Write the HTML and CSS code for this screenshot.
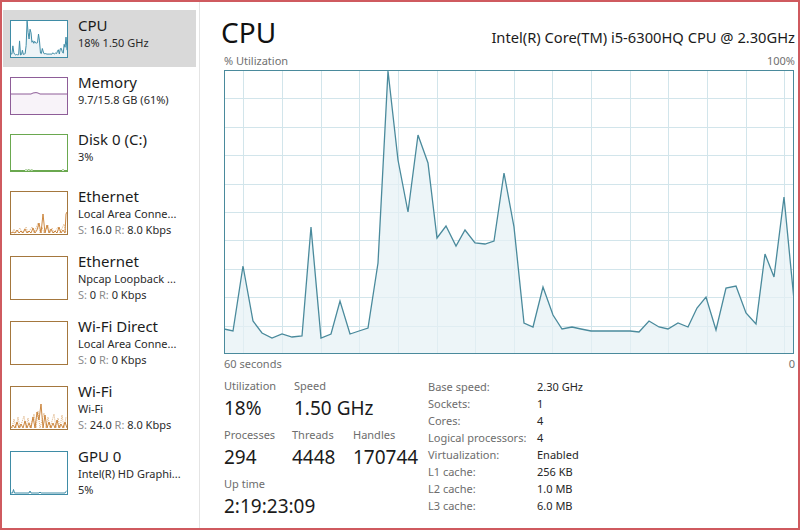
FILE: index.html
```html
<!DOCTYPE html>
<html>
	<head>
		<meta charset="UTF-8">
		<title>Task Manager - CPU</title>
		<link rel="stylesheet" href="styles.css">
	</head>
	<body>
		<div class="window">
			<aside class="sidebar">
				<div class="item selected">
					<svg class="thumb thumb-cpu" viewBox="0 0 570 284" preserveAspectRatio="none">
						<polygon class="cpu-fill" points="0,259 9,261 19,196 29,251 38,263 48,268 58,264 68,267 78,266 87,157 97,268 107,264 116,231 126,264 135,261 144,258 154,193 164,1 174,90 184,142 194,65 204,93 213,168 222,156 232,176 241,160 251,173 261,174 270,171 280,103 290,157 300,253 309,257 319,217 329,245 338,259 348,257 357,259 367,261 377,261 387,261 396,261 406,261 415,262 425,251 435,257 444,259 454,253 464,257 473,238 482,227 492,260 502,218 512,216 522,243 532,254 541,184 550,207 560,127 570,230 570,284 0,284"/>
						<polyline class="cpu-line" vector-effect="non-scaling-stroke" points="0,259 9,261 19,196 29,251 38,263 48,268 58,264 68,267 78,266 87,157 97,268 107,264 116,231 126,264 135,261 144,258 154,193 164,1 174,90 184,142 194,65 204,93 213,168 222,156 232,176 241,160 251,173 261,174 270,171 280,103 290,157 300,253 309,257 319,217 329,245 338,259 348,257 357,259 367,261 377,261 387,261 396,261 406,261 415,262 425,251 435,257 444,259 454,253 464,257 473,238 482,227 492,260 502,218 512,216 522,243 532,254 541,184 550,207 560,127 570,230"/>
					</svg>
					<div class="item-text">
						<div class="item-title">CPU</div>
						<div class="item-sub">18% 1.50 GHz</div>
					</div>
				</div>

				<div class="item">
					<svg class="thumb thumb-mem" viewBox="0 0 56 36" preserveAspectRatio="none">
						<polygon class="mem-fill" points="0,16 20,16 22,15 25,14.6 27,15 29,16 56,16 56,36 0,36"/>
						<polyline class="mem-line" points="0,16 20,16 22,15 25,14.6 27,15 29,16 56,16"/>
					</svg>
					<div class="item-text">
						<div class="item-title">Memory</div>
						<div class="item-sub">9.7/15.8 GB (61%)</div>
					</div>
				</div>

				<div class="item">
					<svg class="thumb thumb-disk" viewBox="0 0 56 36" preserveAspectRatio="none">
						<polyline class="disk-line" points="0,35.5 14,35.5 15,34.5 16,35.5 18,34.6 19,35.5 21,34.8 22,35.5 51,35.5 52,34.4 53,35.5 56,35.5"/>
					</svg>
					<div class="item-text">
						<div class="item-title">Disk 0 (C:)</div>
						<div class="item-sub">3%</div>
					</div>
				</div>

				<div class="item tall">
					<svg class="thumb thumb-net" viewBox="0 0 56 42" preserveAspectRatio="none">
						<polyline class="net-dash" points="1,41 3,37 5,41 9,36 11,41 15,35 17,41 21,35 23,41 27,31 29,41 31,35 33,41 37,33 39,41 41,36 43,41 47,35 49,41 53,32 55,41"/>
						<polyline class="net-line" points="0,41 2,40 4,41 6,38 8,41 10,39 12,41 14,37 16,41 18,39 20,41 22,36 24,41 26,38 28,31 30,41 32,22 34,41 36,33 38,41 40,37 42,41 44,39 46,41 48,35 50,41 52,38 54,41 55,22 56,20"/>
					</svg>
					<div class="item-text">
						<div class="item-title">Ethernet</div>
						<div class="item-sub">Local Area Conne...</div>
						<div class="item-sub"><span class="dim">S:</span> 16.0 <span class="dim">R:</span> 8.0 Kbps</div>
					</div>
				</div>

				<div class="item tall">
					<svg class="thumb thumb-net" viewBox="0 0 56 42"></svg>
					<div class="item-text">
						<div class="item-title">Ethernet</div>
						<div class="item-sub">Npcap Loopback ...</div>
						<div class="item-sub"><span class="dim">S:</span> 0 <span class="dim">R:</span> 0 Kbps</div>
					</div>
				</div>

				<div class="item tall">
					<svg class="thumb thumb-net" viewBox="0 0 56 42"></svg>
					<div class="item-text">
						<div class="item-title">Wi-Fi Direct</div>
						<div class="item-sub">Local Area Conne...</div>
						<div class="item-sub"><span class="dim">S:</span> 0 <span class="dim">R:</span> 0 Kbps</div>
					</div>
				</div>

				<div class="item tall">
					<svg class="thumb thumb-net" viewBox="0 0 56 42" preserveAspectRatio="none">
						<polyline class="net-dash" points="1,41 3,32 5,41 7,30 9,41 13,29 15,41 17,31 19,41 23,27 25,41 27,24 29,41 33,26 35,41 37,30 39,41 43,27 45,41 47,31 49,41 51,28 53,41 55,30"/>
						<polyline class="net-line" points="0,41 2,38 4,41 6,35 8,41 10,37 12,41 14,34 16,41 18,36 20,41 22,30 24,41 26,25 28,33 30,17 32,41 34,28 36,41 38,35 40,41 42,36 44,41 46,33 48,41 50,37 52,41 54,35 56,41"/>
					</svg>
					<div class="item-text">
						<div class="item-title">Wi-Fi</div>
						<div class="item-sub">Wi-Fi</div>
						<div class="item-sub"><span class="dim">S:</span> 24.0 <span class="dim">R:</span> 8.0 Kbps</div>
					</div>
				</div>

				<div class="item tall">
					<svg class="thumb thumb-gpu" viewBox="0 0 56 42" preserveAspectRatio="none">
						<polyline class="cpu-line" points="0,41 1.5,41 2.5,37.5 3.5,41 18,41 19,39 20,41 28,41 29,40 30,41 54,41 55,39.5 56,38.5"/>
					</svg>
					<div class="item-text">
						<div class="item-title">GPU 0</div>
						<div class="item-sub">Intel(R) HD Graphi...</div>
						<div class="item-sub">5%</div>
					</div>
				</div>
			</aside>

			<main class="panel">
				<header class="panel-head">
					<h1 class="panel-title">CPU</h1>
					<span class="cpu-name">Intel(R) Core(TM) i5-6300HQ CPU @ 2.30GHz</span>
				</header>

				<div class="axis">
					<span>% Utilization</span>
					<span>100%</span>
				</div>

				<svg class="chart" width="570" height="284" viewBox="0 0 570 284">
					<!-- grid: 10 rows, columns scrolled by 19px -->
					<path class="grid-line" d="M0 28.5 H570 M0 57.5 H570 M0 85.5 H570 M0 114.5 H570 M0 142.5 H570 M0 170.5 H570 M0 199.5 H570 M0 227.5 H570 M0 256.5 H570
						M19.5 0 V284 M58.5 0 V284 M97.5 0 V284 M135.5 0 V284 M174.5 0 V284 M213.5 0 V284 M251.5 0 V284 M290.5 0 V284
						M328.5 0 V284 M367.5 0 V284 M406.5 0 V284 M444.5 0 V284 M483.5 0 V284 M522.5 0 V284 M560.5 0 V284"/>
					<polygon class="chart-fill" points="0,259 9,261 19,196 29,251 38,263 48,268 58,264 68,267 78,266 87,157 97,268 107,264 116,231 126,264 135,261 144,258 154,193 164,1 174,90 184,142 194,65 204,93 213,168 222,156 232,176 241,160 251,173 261,174 270,171 280,103 290,157 300,253 309,257 319,217 329,245 338,259 348,257 357,259 367,261 377,261 387,261 396,261 406,261 415,262 425,251 435,257 444,259 454,253 464,257 473,238 482,227 492,260 502,218 512,216 522,243 532,254 541,184 550,207 560,127 570,230 570,284 0,284"/>
					<polyline class="chart-line" points="0,259 9,261 19,196 29,251 38,263 48,268 58,264 68,267 78,266 87,157 97,268 107,264 116,231 126,264 135,261 144,258 154,193 164,1 174,90 184,142 194,65 204,93 213,168 222,156 232,176 241,160 251,173 261,174 270,171 280,103 290,157 300,253 309,257 319,217 329,245 338,259 348,257 357,259 367,261 377,261 387,261 396,261 406,261 415,262 425,251 435,257 444,259 454,253 464,257 473,238 482,227 492,260 502,218 512,216 522,243 532,254 541,184 550,207 560,127 570,230"/>
					<rect class="chart-border" x="0.5" y="0.5" width="569" height="283"/>
				</svg>

				<div class="axis axis-bottom">
					<span>60 seconds</span>
					<span>0</span>
				</div>

				<section class="stats">
					<div class="stats-left">
						<div class="stat-row">
							<div class="stat w-util">
								<div class="stat-label">Utilization</div>
								<div class="stat-value">18%</div>
							</div>
							<div class="stat">
								<div class="stat-label">Speed</div>
								<div class="stat-value">1.50 GHz</div>
							</div>
						</div>
						<div class="stat-row">
							<div class="stat w-proc">
								<div class="stat-label">Processes</div>
								<div class="stat-value">294</div>
							</div>
							<div class="stat w-thr">
								<div class="stat-label">Threads</div>
								<div class="stat-value">4448</div>
							</div>
							<div class="stat">
								<div class="stat-label">Handles</div>
								<div class="stat-value">170744</div>
							</div>
						</div>
						<div class="stat-row">
							<div class="stat">
								<div class="stat-label">Up time</div>
								<div class="stat-value">2:19:23:09</div>
							</div>
						</div>
					</div>

					<div class="details">
						<span class="d-label">Base speed:</span><span class="d-value">2.30 GHz</span>
						<span class="d-label">Sockets:</span><span class="d-value">1</span>
						<span class="d-label">Cores:</span><span class="d-value">4</span>
						<span class="d-label">Logical processors:</span><span class="d-value">4</span>
						<span class="d-label">Virtualization:</span><span class="d-value">Enabled</span>
						<span class="d-label">L1 cache:</span><span class="d-value">256 KB</span>
						<span class="d-label">L2 cache:</span><span class="d-value">1.0 MB</span>
						<span class="d-label">L3 cache:</span><span class="d-value">6.0 MB</span>
					</div>
				</section>
			</main>
		</div>
	</body>
</html>
```

FILE: styles.css
```css
html, body{margin: 0; padding: 0; background: #fff;}
.window{width: 800px; height: 530px; box-sizing: border-box; border: 2px solid #cf5a5f; display: flex; background: #fff; font-family: "Noto Sans", "Open Sans", sans-serif; color: #1b1b1b; overflow: hidden;}

/* left list */
.sidebar{width: 198px; flex: none; box-sizing: border-box; border-right: 1px solid #e4e4e4; padding-top: 8px;}
.item{display: flex; width: 193px; margin-left: 1px; box-sizing: border-box; padding: 10px 0 9px 7px;}
.item.selected{background: #d9d9d9;}
.thumb{display: block; flex: none; width: 58px; height: 38px; box-sizing: border-box; margin-right: 10px; background: #fff; overflow: hidden;}
.item.tall .thumb{height: 44px;}
.item-text{margin-top: -4px; white-space: nowrap;}
.item-title{font-size: 15px; line-height: 19px; color: #1b1b1b;}
.item-sub{font-size: 11px; line-height: 15px; color: #2a2a2a;}
.item.tall .item-sub{line-height: 15.5px;}
.dim{color: #8a8a8a;}

.thumb-cpu, .thumb-gpu{border: 1px solid #3f8ca6;}
.thumb-mem{border: 1px solid #8e5d98;}
.thumb-disk{border: 1px solid #6aa84f;}
.thumb-net{border: 1px solid #a4773e;}

.cpu-fill{fill: #edf4f7;}
.cpu-line{fill: none; stroke: #3f8ca6; stroke-width: 1;}
.mem-fill{fill: #f8f3f9;}
.mem-line{fill: none; stroke: #8e5d98; stroke-width: 1;}
.disk-line{fill: none; stroke: #6aa84f; stroke-width: 1;}
.net-line{fill: none; stroke: #c67a2c; stroke-width: 0.9;}
.net-dash{fill: none; stroke: #d49a5c; stroke-width: 0.8; stroke-dasharray: 1 1;}

/* right panel */
.panel{flex: 1; padding: 14px 3px 0 24px; min-width: 0;}
.panel-head{display: flex; justify-content: space-between; align-items: baseline;}
.panel-title{margin: 0 0 0 -3px; font-size: 28px; line-height: 32px; font-weight: normal; color: #111;}
.cpu-name{font-size: 14.7px; color: #1b1b1b;}

.axis{display: flex; justify-content: space-between; font-size: 11px; line-height: 14px; color: #707070; margin-top: 6px; margin-bottom: 2px;}
.axis-bottom{margin-top: 3px; margin-bottom: 0;}

.chart{display: block;}
.grid-line{fill: none; stroke: #d2e5eb; stroke-width: 1;}
.chart-fill{fill: #e6f1f5; fill-opacity: 0.7;}
.chart-line{fill: none; stroke: #4a8a9c; stroke-width: 1.3;}
.chart-border{fill: none; stroke: #4a8a9c; stroke-width: 1;}

.stats{display: flex; margin-top: 8px;}
.stats-left{width: 204px; flex: none;}
.stat-row{display: flex; margin-bottom: 8px;}
.stat.w-util{width: 70px;}
.stat.w-proc{width: 68px;}
.stat.w-thr{width: 61px;}
.stat-label{font-size: 11px; line-height: 14px; color: #6d6d6d;}
.stat-value{font-size: 19px; line-height: 24px; margin-top: 3px; color: #1b1b1b;}

.details{display: grid; grid-template-columns: 109px auto; grid-auto-rows: 17.1px; margin-top: -1.5px; font-size: 11px; line-height: 17px;}
.d-label{color: #6d6d6d;}
.d-value{color: #262626;}
```
